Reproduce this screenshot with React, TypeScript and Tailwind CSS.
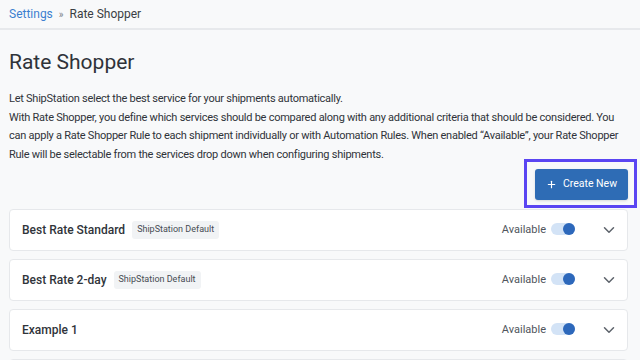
import { ChevronDown, Plus } from "lucide-react";

type Rule = {
  name: string;
  isDefault?: boolean;
  available: boolean;
};

const rules: Rule[] = [
  { name: "Best Rate Standard", isDefault: true, available: true },
  { name: "Best Rate 2-day", isDefault: true, available: true },
  { name: "Example 1", available: true },
];

function Toggle({ on }: { on: boolean }) {
  return (
    <span
      className={`relative inline-flex h-[12px] w-[24px] items-center rounded-full ${
        on ? "bg-[#d3e3f6]" : "bg-gray-200"
      }`}
    >
      <span
        className={`absolute h-[12px] w-[12px] rounded-full ${
          on ? "right-0 bg-[#2d68bb]" : "left-0 bg-white"
        }`}
      />
    </span>
  );
}

function RuleCard({ rule }: { rule: Rule }) {
  return (
    <div className="flex h-[42px] shrink-0 items-center rounded-[4px] border border-[#e6e8eb] bg-white pl-[12px] pr-[9px]">
      <span className="text-[12px] font-medium text-[#30343a]">{rule.name}</span>
      {rule.isDefault && (
        <span className="ml-[7px] rounded-[3px] bg-[#f1f3f5] px-[5px] py-[2px] text-[9px] text-[#474c53]">
          ShipStation Default
        </span>
      )}
      <div className="ml-auto flex items-center">
        <span className="text-[11px] text-[#50555c]">Available</span>
        <span className="ml-[5px]">
          <Toggle on={rule.available} />
        </span>
        <ChevronDown className="ml-[25px] h-[18px] w-[18px] text-[#5d636b]" strokeWidth={2} />
      </div>
    </div>
  );
}

export default function App() {
  return (
    <div
      className="h-[360px] w-[640px] overflow-hidden bg-[#f8f9fa] text-[#30343a]"
      style={{ fontFamily: "Roboto, 'Liberation Sans', sans-serif" }}
    >
      <div className="flex h-[30px] items-center border-b-2 border-[#e7e9ec] px-[9px] text-[12px]">
        <span className="text-[#3c7fd0]">Settings</span>
        <span className="mx-[6px] text-[10px] text-[#7d8289]">»</span>
        <span className="text-[#3a3e44]">Rate Shopper</span>
      </div>

      <div className="px-[9px]">
        <h1 className="mt-[19px] text-[21px] leading-[26px] text-[#2f3339]">Rate Shopper</h1>

        <div className="mt-[15px] text-[11px] leading-[18.7px] tracking-[-0.25px] text-[#2f3339]">
          <p>Let ShipStation select the best service for your shipments automatically.</p>
          <p>
            With Rate Shopper, you define which services should be compared along with any additional
            criteria that should be considered. You can apply a Rate Shopper Rule to each shipment
            individually or with Automation Rules. When enabled “Available”, your Rate Shopper Rule will
            be selectable from the services drop down when configuring shipments.
          </p>
        </div>

        <div className="mt-[4px] flex justify-end pr-[3px]">
          <div className="relative">
            <span className="pointer-events-none absolute -bottom-[8px] -left-[11px] -right-[9px] -top-[10px] border-[3px] border-[#5a45f2]" />
            <button className="flex h-[31px] w-[93px] items-center justify-center gap-[6px] rounded-[3px] bg-[#2e6cb5] text-[10.5px] text-white shadow-sm">
              <Plus className="h-[11px] w-[11px]" strokeWidth={2.5} />
              Create New
            </button>
          </div>
        </div>

        <div className="mt-[9px] flex w-[619px] flex-col gap-[8px]">
          {rules.map((rule) => (
            <RuleCard key={rule.name} rule={rule} />
          ))}
          <div className="h-[42px] shrink-0 rounded-[4px] border border-[#e6e8eb] bg-white" />
        </div>
      </div>
    </div>
  );
}
